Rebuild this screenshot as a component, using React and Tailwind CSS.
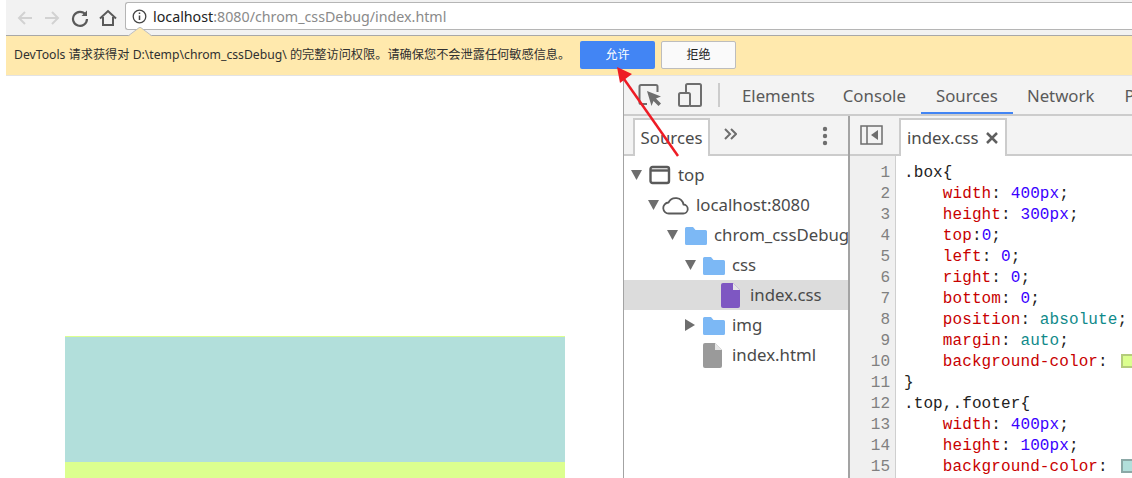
import React from "react";

const ui = { fontFamily: '"Noto Sans", "Open Sans", sans-serif' };

const Folder = () => (
  <svg width="22" height="19" viewBox="0 0 22 19" className="shrink-0">
    <path d="M0 2.500A1.500 1.500 0 0 1 1.500 1H8l2.500 3H20.500A1.500 1.500 0 0 1 22 5.500v12a1.500 1.500 0 0 1-1.500 1.500h-19A1.500 1.500 0 0 1 0 17.500z" fill="#7cb8f5" />
  </svg>
);
const File = ({ c }) => (
  <svg width="19" height="25" viewBox="0 0 19 25" className="shrink-0">
    <path d="M2 0H12L19 7V23a2 2 0 0 1-2 2H2a2 2 0 0 1-2-2V2a2 2 0 0 1 2-2z" fill={c} />
    <path d="M12 0L19 7H12z" fill="#e6e6e6" />
  </svg>
);
const Tri = ({ open }) => (
  <svg width="12" height="12" viewBox="0 0 12 12" className="shrink-0">
    {open ? <path d="M0 1H11L5.500 11z" fill="#6e6e6e" /> : <path d="M0 0L10 6L0 12z" fill="#6e6e6e" />}
  </svg>
);

const P = ({ children }) => <span className="text-[#c80000]">{children}</span>;
const N = ({ children }) => <span className="text-[#3a00ff]">{children}</span>;
const K = ({ children }) => <span className="text-[#108a8a]">{children}</span>;
const Swatch = ({ bg, bd }) => (
  <span className={`inline-block ml-[4px] w-[14px] h-[14px] border-2 align-[-2px] ${bg} ${bd}`} />
);

const lines = [
  <>.box{"{"}</>,
  <>{"    "}<P>width</P>: <N>400px</N>;</>,
  <>{"    "}<P>height</P>: <N>300px</N>;</>,
  <>{"    "}<P>top</P>:<N>0</N>;</>,
  <>{"    "}<P>left</P>: <N>0</N>;</>,
  <>{"    "}<P>right</P>: <N>0</N>;</>,
  <>{"    "}<P>bottom</P>: <N>0</N>;</>,
  <>{"    "}<P>position</P>: <K>absolute</K>;</>,
  <>{"    "}<P>margin</P>: <K>auto</K>;</>,
  <>{"    "}<P>background-color</P>: <Swatch bg="bg-[#dcff8f]" bd="border-[#b4cc7c]" /></>,
  <>{"}"}</>,
  <>.top,.footer{"{"}</>,
  <>{"    "}<P>width</P>: <N>400px</N>;</>,
  <>{"    "}<P>height</P>: <N>100px</N>;</>,
  <>{"    "}<P>background-color</P>: <Swatch bg="bg-[#b2dfdb]" bd="border-[#8ba8a6]" /></>,
];

function Row({ pad, tri, icon, label, selected, gap }) {
  return (
    <div className={`flex items-center h-[30px] ${selected ? "bg-[#dcdcdc]" : ""}`} style={{ paddingLeft: pad }}>
      <span className="w-[18px] shrink-0 flex">{tri !== undefined && <Tri open={tri} />}</span>
      {icon}
      <span className="whitespace-nowrap text-[16.800px] text-[#4a4a4a]" style={{ marginLeft: gap }}>{label}</span>
    </div>
  );
}

export default function App() {
  return (
    <div className="relative w-[1132px] h-[478px] overflow-hidden bg-white" style={ui}>
      {/* Browser toolbar */}
      <div className="ml-[6px] h-[36px] bg-[#f2f2f2] border-b border-[#a8a8a8] flex items-center pl-[10px]">
        <svg width="18" height="18" viewBox="0 0 18 18" fill="none" stroke="#d2d2d2" strokeWidth="2" className="shrink-0"><path d="M16 9H3M9 3L3 9l6 6" /></svg>
        <svg width="18" height="18" viewBox="0 0 18 18" fill="none" stroke="#d2d2d2" strokeWidth="2" className="ml-[9px] shrink-0"><path d="M2 9h13M9 3l6 6-6 6" /></svg>
        <svg width="18" height="18" viewBox="0 0 18 18" fill="none" stroke="#5a5a5a" strokeWidth="2.200" className="ml-[10px] shrink-0"><path d="M14.500 5.500A7 7 0 1 0 16 10" /><path d="M16 1.500V7h-5.500z" fill="#5a5a5a" stroke="none" /></svg>
        <svg width="18" height="18" viewBox="0 0 18 18" fill="none" stroke="#5a5a5a" strokeWidth="2" className="ml-[10px] shrink-0"><path d="M1 9.500L9 2l8 7.500M4 8v8h10V8" /></svg>
        <div className="ml-[8px] flex-1 h-[28px] bg-white border border-[#b5b5b5] rounded-l-[3px] flex items-center pl-[6px] -mt-[3px] border-r-0">
          <svg width="15" height="15" viewBox="0 0 15 15" fill="none" stroke="#444" strokeWidth="1.300" className="shrink-0"><circle cx="7.500" cy="7.500" r="6.300" /><path d="M7.500 6.500v4.500M7.500 3.500v1.600" strokeWidth="1.500" /></svg>
          <span className="ml-[6px] pt-[1px] text-[14.250px] text-[#8a8a8a] whitespace-nowrap"><span className="text-[#222]">localhost</span>:8080/chrom_cssDebug/index.html</span>
        </div>
      </div>
      {/* Infobar */}
      <div className="ml-[6px] h-[40px] bg-[#ffe9ad] border-b border-[#e3e3e3] flex items-center pl-[8px] text-[12.200px] text-[#303030]" style={{ fontFamily: '"Noto Sans", "Noto Sans CJK SC", sans-serif' }}>
        <span className="w-[566px] whitespace-nowrap">DevTools 请求获得对 D:\temp\chrom_cssDebug\ 的完整访问权限。请确保您不会泄露任何敏感信息。</span>
        <button className="w-[75px] h-[28px] rounded-[2px] bg-[#4285f4] text-white text-[12px] -mt-[1px]">允许</button>
        <button className="ml-[6px] w-[75px] h-[28px] rounded-[2px] bg-[#fafafa] border border-[#bdbdbd] text-[#222] text-[12px] -mt-[1px]">拒绝</button>
      </div>
      {/* Main */}
      <div className="flex h-[402px]">
        <div className="w-[623px] shrink-0 pl-[65px] pt-[260px]">
          <div className="w-[500px] h-[142px] bg-[#dcff8f] pt-px">
            <div className="h-[125px] bg-[#b2dfdb]" />
          </div>
        </div>
        <div className="flex-1 min-w-0 border-l border-[#a3a3a3] flex flex-col">
          {/* DevTools tabs */}
          <div className="h-[40px] bg-[#f3f3f3] border-b-2 border-[#cccccc] flex items-center shrink-0 overflow-hidden">
            <svg width="24" height="24" viewBox="0 0 24 24" fill="none" className="ml-[14px] shrink-0">
              <path d="M9 21H3a1.500 1.500 0 0 1-1.500-1.500V3.500A1.500 1.500 0 0 1 3 2h15a1.500 1.500 0 0 1 1.500 1.500V9" stroke="#6e6e6e" strokeWidth="2" />
              <path d="M9 8L23 13.500l-5 2 5 5-2.500 2.500-5-5-2 5z" fill="#6e6e6e" />
            </svg>
            <svg width="24" height="24" viewBox="0 0 24 24" fill="none" stroke="#6e6e6e" strokeWidth="2" className="ml-[16px] shrink-0">
              <path d="M8 10V2.500A1.500 1.500 0 0 1 9.500 1H21.500a1.500 1.500 0 0 1 1.500 1.500v19a1.500 1.500 0 0 1-1.500 1.500H12" />
              <rect x="1" y="10" width="11" height="13" rx="1.500" />
            </svg>
            <span className="ml-[16px] w-[2px] h-[24px] bg-[#cccccc] shrink-0" />
            <div className="flex text-[16.800px] text-[#5a5a5a] h-full items-center whitespace-nowrap pt-px">
              <span className="ml-[22px]">Elements</span>
              <span className="ml-[28px]">Console</span>
              <div className="ml-[15px] w-[92px] h-full relative flex items-center justify-center shrink-0">
                <span>Sources</span>
                <span className="absolute left-0 right-0 bottom-0 h-[2px] bg-[#4285f4]" />
              </div>
              <span className="ml-[14px]">Network</span>
              <span className="ml-[30px]">P</span>
            </div>
          </div>
          <div className="flex flex-1 min-h-0">
            {/* Navigator */}
            <div className="w-[224px] shrink-0 overflow-hidden flex flex-col">
              <div className="h-[40px] bg-[#f3f3f3] border-b-2 border-[#cccccc] flex items-end pl-[9px] shrink-0 relative">
                <div className="w-[77px] h-[38px] bg-white border-2 border-b-0 border-[#cccccc] flex items-center justify-center text-[16.800px] text-[#4a4a4a] -mb-[2px]">Sources</div>
                <svg width="14" height="14" viewBox="0 0 14 14" fill="none" stroke="#6e6e6e" strokeWidth="2" className="absolute left-[99px] top-[11px]"><path d="M2 2l5 5-5 5M8 2l5 5-5 5" /></svg>
                <svg width="6" height="20" viewBox="0 0 6 20" fill="#6e6e6e" className="absolute left-[198px] top-[10px]"><circle cx="3" cy="3" r="2.200" /><circle cx="3" cy="10" r="2.200" /><circle cx="3" cy="17" r="2.200" /></svg>
              </div>
              <div className="pt-[4px]">
                <Row pad={7} tri={true} label="top" gap={7} icon={
                  <svg width="22" height="20" viewBox="0 0 22 20" fill="none" className="shrink-0"><rect x="1.500" y="2" width="18.500" height="16" rx="2" stroke="#5a5a5a" strokeWidth="2.400" /><path d="M1.500 5.500h18.500" stroke="#5a5a5a" strokeWidth="2.400" /></svg>
                } />
                <Row pad={24} tri={true} label="localhost:8080" gap={6} icon={
                  <svg width="28" height="20" viewBox="0 0 28 20" fill="none" stroke="#5a5a5a" strokeWidth="1.800" className="shrink-0 -ml-[4px]"><path d="M7 18.500a5.500 5.500 0 0 1-.5-11 8 8 0 0 1 15 2 4.500 4.500 0 0 1-.5 9z" /></svg>
                } />
                <Row pad={43} tri={true} label="chrom_cssDebug" gap={7} icon={<Folder />} />
                <Row pad={61} tri={true} label="css" gap={7} icon={<Folder />} />
                <Row pad={79} label="index.css" gap={10} selected icon={<File c="#7e57c2" />} />
                <Row pad={61} tri={false} label="img" gap={7} icon={<Folder />} />
                <Row pad={61} label="index.html" gap={10} icon={<File c="#9a9a9a" />} />
              </div>
            </div>
            {/* Editor */}
            <div className="flex-1 min-w-0 border-l-2 border-[#a3a3a3] flex flex-col">
              <div className="h-[40px] bg-[#f3f3f3] border-b-2 border-[#cccccc] flex items-end shrink-0 relative">
                <svg width="24" height="20" viewBox="0 0 24 20" fill="none" className="absolute left-[10px] top-[9px]"><rect x="1" y="1" width="21" height="18" stroke="#6e6e6e" strokeWidth="1.500" /><path d="M7 1v18" stroke="#6e6e6e" strokeWidth="1.500" /><path d="M18 5v10l-7-5z" fill="#6e6e6e" /></svg>
                <div className="ml-[49px] w-[108px] h-[38px] bg-white border-2 border-b-0 border-[#cccccc] flex items-center pl-[6px] text-[16.800px] text-[#4a4a4a] -mb-[2px]">
                  index.css
                  <svg width="12" height="12" viewBox="0 0 12 12" stroke="#5f5f5f" strokeWidth="2.500" className="ml-[7px] shrink-0"><path d="M1 1l10 10M11 1L1 11" /></svg>
                </div>
              </div>
              <div className="flex-1 min-h-0 flex overflow-hidden bg-white" style={{ fontFamily: '"Liberation Mono", monospace' }}>
                <div className="w-[46px] shrink-0 bg-[#f0f0f0] border-r border-[#cfcfcf] text-right pr-[5px] text-[#808080] text-[16px] leading-[21px] pt-[7px]">
                  {lines.map((_, i) => <div key={i}>{i + 1}</div>)}
                </div>
                <div className="pl-[8px] pt-[7px] text-[#222] text-[16px] leading-[21px] whitespace-pre tracking-[0.1px]">
                  {lines.map((l, i) => <div key={i}>{l}</div>)}
                </div>
              </div>
            </div>
          </div>
        </div>
      </div>
      {/* Caret of the permission bubble */}
      <svg width="24" height="10" viewBox="0 0 24 10" className="absolute left-[128px] top-[27px]"><path d="M0 9.500L12 0l12 9.500z" fill="#ffe9ad" /><path d="M0 9L12 0l12 9" fill="none" stroke="#bdbdbd" /></svg>
      {/* Annotation arrow */}
      <svg width="80" height="100" viewBox="610 62 80 100" className="absolute left-[610px] top-[62px]">
        <path d="M678 156L624 79" stroke="#ee1c25" strokeWidth="2.500" />
        <path d="M617 67L632 74 620 83z" fill="#ee1c25" />
      </svg>
    </div>
  );
}
